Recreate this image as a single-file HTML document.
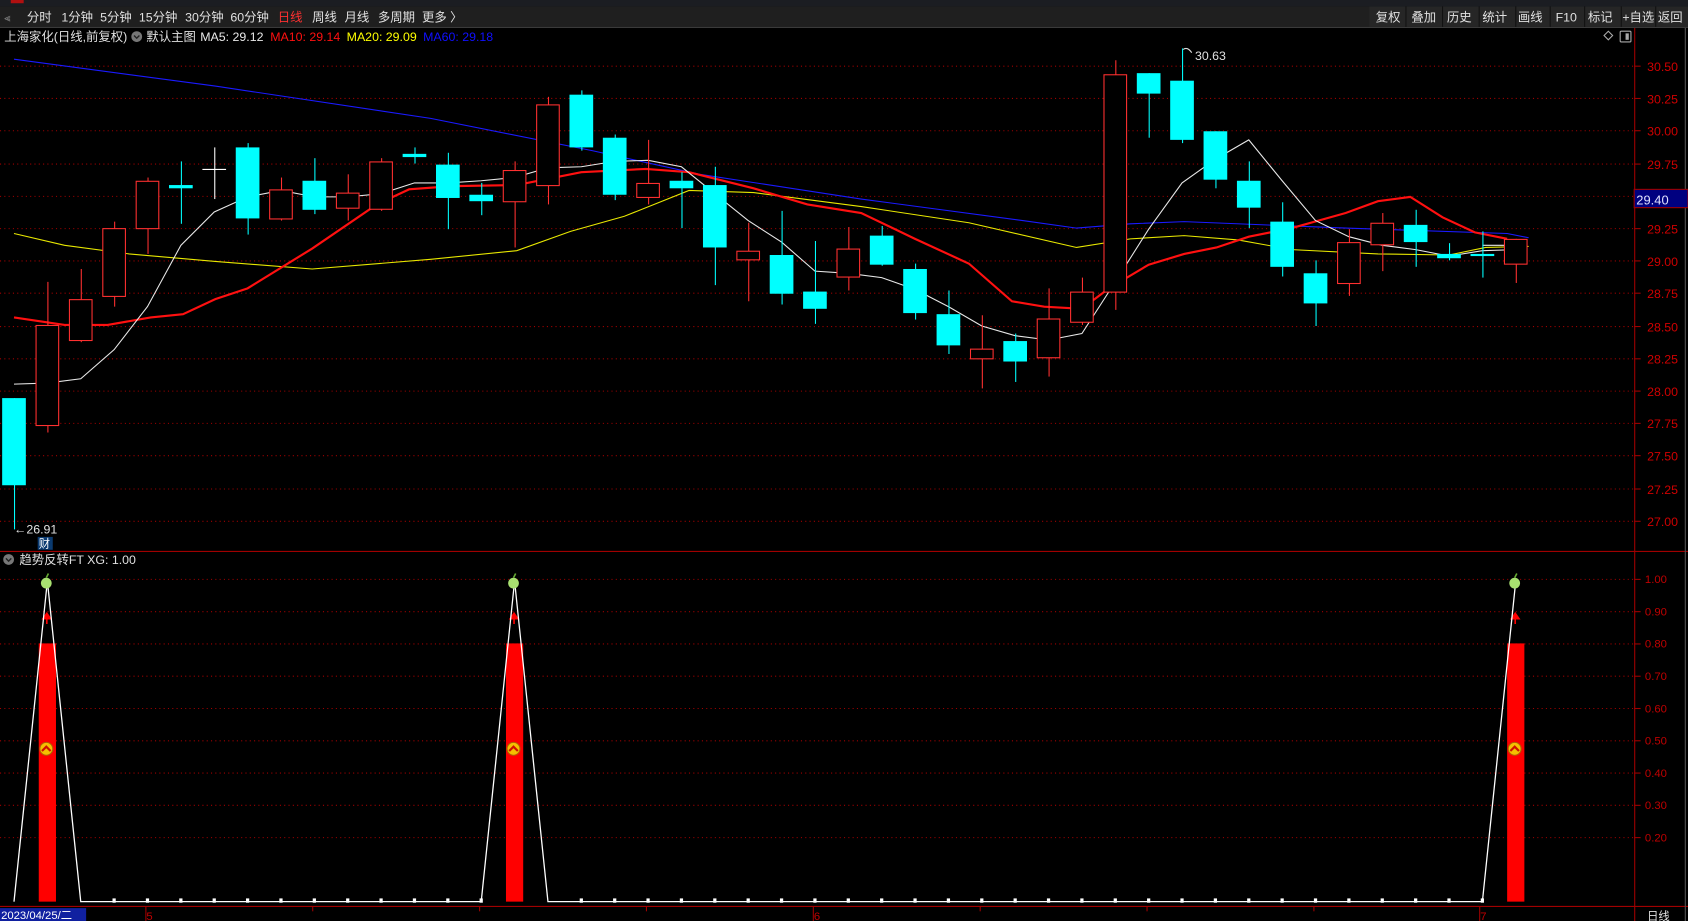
<!DOCTYPE html>
<html><head><meta charset="utf-8"><style>
html,body{margin:0;padding:0;background:#000;overflow:hidden}
svg{display:block}
text{font-family:"Liberation Sans","Noto Sans CJK SC",sans-serif}
</style></head><body>
<svg id="s" width="1688" height="921" viewBox="0 0 1568 856" preserveAspectRatio="none" xmlns="http://www.w3.org/2000/svg">
<rect width="1568" height="856" fill="#000"/>
<rect x="0" y="0" width="1568" height="6" fill="#1b1d22"/>
<rect x="10" y="0" width="12" height="3" fill="#b01010"/>
<rect x="0" y="6" width="1568" height="19" fill="#1f1f1f"/>
<line x1="0" y1="25.5" x2="1568" y2="25.5" stroke="#3a3a3a"/>
<g font-size="11.5" fill="#e0e0e0">
<text x="4" y="20" fill="#888" font-size="10">⫷</text>
<text x="25" y="20">分时</text><text x="57" y="20">1分钟</text><text x="93" y="20">5分钟</text>
<text x="129" y="20">15分钟</text><text x="172" y="20">30分钟</text><text x="214" y="20">60分钟</text>
<text x="258" y="20" fill="#ff3030">日线</text><text x="290" y="20">周线</text><text x="320" y="20">月线</text>
<text x="351" y="20">多周期</text><text x="392" y="20">更多 〉</text>
</g>
<g font-size="11.5" fill="#e0e0e0">
<rect x="1272" y="6" width="296" height="19" fill="#262626"/>
<g stroke="#111"><line x1="1306" y1="6" x2="1306" y2="25"/><line x1="1340" y1="6" x2="1340" y2="25"/><line x1="1374" y1="6" x2="1374" y2="25"/><line x1="1408" y1="6" x2="1408" y2="25"/><line x1="1440" y1="6" x2="1440" y2="25"/><line x1="1472" y1="6" x2="1472" y2="25"/><line x1="1506" y1="6" x2="1506" y2="25"/><line x1="1538" y1="6" x2="1538" y2="25"/></g>
<text x="1278" y="20">复权</text><text x="1311" y="20">叠加</text><text x="1344" y="20">历史</text><text x="1377" y="20">统计</text>
<text x="1410" y="20">画线</text><text x="1445" y="20">F10</text><text x="1475" y="20">标记</text><text x="1507" y="20">+自选</text><text x="1540" y="20">返回</text>
</g>
<g font-size="11.5">
<text x="4" y="38" fill="#e0e0e0">上海家化(日线,前复权)</text>
<circle cx="127" cy="34" r="5" fill="#777"/><path d="M124.5 33 L127 35.5 L129.5 33" stroke="#222" fill="none" stroke-width="1.3"/>
<text x="136" y="38" fill="#e0e0e0">默认主图</text>
<text x="186" y="38" fill="#e8e8e8">MA5: 29.12</text>
<text x="251" y="38" fill="#ff1010">MA10: 29.14</text>
<text x="322" y="38" fill="#ffff00">MA20: 29.09</text>
<text x="393" y="38" fill="#1010ff">MA60: 29.18</text>
</g>
<path d="M1490 33 l4 -4 l4 4 l-4 4z" stroke="#aaa" fill="none"/>
<rect x="1505" y="29" width="10" height="10" rx="1" stroke="#aaa" fill="none"/><rect x="1510" y="31" width="3" height="6" fill="#aaa"/>
<line x1="1518.5" y1="26" x2="1518.5" y2="856" stroke="#a00000"/>
<line x1="0" y1="512.5" x2="1568" y2="512.5" stroke="#a00000"/>
<line x1="0" y1="842.5" x2="1568" y2="842.5" stroke="#a00000"/>
<line x1="1565.5" y1="26" x2="1565.5" y2="856" stroke="#555"/>
<g id="grid" stroke="#a00000" stroke-dasharray="1 3"></g>
<g id="axis" font-size="11.5" fill="#d00000"></g>
<rect x="1518" y="176" width="50" height="17" fill="#000080" stroke="#a00000"/>
<text x="1520" y="190" font-size="12" fill="#e0e0ff">29.40</text>
<g id="ma"></g>
<g id="cd"></g>
<text x="1110" y="56" font-size="11.5" fill="#e0e0e0">30.63</text>
<path d="M1099 46 q4 -3 8 3" stroke="#ddd" fill="none"/>
<text x="13" y="496" font-size="11.5" fill="#e0e0e0">←26.91</text>
<rect x="35" y="499" width="14" height="12" fill="#0a3a70"/><text x="36" y="509" font-size="10.5" fill="#fff">财</text>
<circle cx="8" cy="520" r="5" fill="#777"/><path d="M5.5 519 L8 521.5 L10.5 519" stroke="#222" fill="none" stroke-width="1.3"/>
<text x="18" y="524" font-size="11.5" fill="#e0e0e0">趋势反转FT  XG: 1.00</text>
<g id="low"></g>
<g font-size="10.5" fill="#c00000">
<text x="1528" y="542">1.00</text><text x="1528" y="572">0.90</text><text x="1528" y="602">0.80</text><text x="1528" y="632">0.70</text><text x="1528" y="662">0.60</text><text x="1528" y="692">0.50</text><text x="1528" y="722">0.40</text><text x="1528" y="752">0.30</text><text x="1528" y="782">0.20</text>
</g>
<rect x="0" y="844" width="80" height="12" fill="#1020a0"/>
<text x="1" y="854" font-size="10.5" fill="#fff">2023/04/25/二</text>
<g font-size="10.5" fill="#c00000"><text x="136" y="855">5</text><text x="756" y="855">6</text><text x="1375" y="855">7</text></g>
<g stroke="#a00000"><line x1="135.5" y1="843" x2="135.5" y2="856"/><line x1="755.5" y1="843" x2="755.5" y2="856"/><line x1="1374.5" y1="843" x2="1374.5" y2="856"/><line x1="290.5" y1="843" x2="290.5" y2="847"/><line x1="445.5" y1="843" x2="445.5" y2="847"/><line x1="600.5" y1="843" x2="600.5" y2="847"/><line x1="910.5" y1="843" x2="910.5" y2="847"/><line x1="1065.5" y1="843" x2="1065.5" y2="847"/><line x1="1220.5" y1="843" x2="1220.5" y2="847"/></g>
<text x="1530" y="855" font-size="10.5" fill="#e0e0e0">日线</text>
</svg>
<script>
var NS="http://www.w3.org/2000/svg";
function el(p,t,a){var e=document.createElementNS(NS,t);for(var k in a)e.setAttribute(k,a[k]);document.getElementById(p).appendChild(e);return e;}
var P=[30.5,30.25,30,29.75,29.5,29.25,29,28.75,28.5,28.25,28,27.75,27.5,27.25,27];
P.forEach(function(p){var y=Math.round(61+(30.5-p)*120.8)+0.5;el("grid","line",{x1:0,y1:y,x2:1518,y2:y});el("grid","line",{x1:1518,y1:y,x2:1524,y2:y,"stroke-dasharray":"none"});
 if(p!=29.5){var t=el("axis","text",{x:1530,y:y+4.5});t.textContent=p.toFixed(2);}});
[1,0.9,0.8,0.7,0.6,0.5,0.4,0.3,0.2].forEach(function(v){var y=Math.round(538+(1-v)*300)+0.5;el("grid","line",{x1:0,y1:y,x2:1518,y2:y});el("grid","line",{x1:1518,y1:y,x2:1524,y2:y,"stroke-dasharray":"none"});});
function pl(pts,c,w){el("ma","polyline",{points:pts,stroke:c,"stroke-width":w,fill:"none"});}
pl("13,55 200,80 400,110 550,140 650,162 800,185 950,205 1000,212 1050,208 1100,206 1250,212 1400,217 1420,221","#1a1aff",1);
pl("13,217 60,228 120,236 200,243 290,250 400,241 480,233 530,215 580,201 640,177 700,179 800,192 900,207 1000,230 1050,222 1100,219 1150,223 1200,232 1280,236 1346,237 1380,230 1420,229","#e8e800",1);
pl("13,295 60,302 100,302 140,295 170,292 200,278 230,268 290,231 350,190 380,176 420,173 480,172 540,160 600,157 640,160 700,175 750,190 800,198 850,222 900,245 940,280 970,285 1005,287 1030,268 1067,246 1100,236 1130,230 1160,220 1200,212 1250,198 1280,187 1310,183 1340,202 1370,216 1400,222","#ff1010",2);
pl("13,357 44,356 75,352 106,325 137,285 168,228 199,197 230,183 261,177 292,183 323,183 354,180 385,170 416,170 447,168 478,165 509,156 540,155 571,150 602,149 633,155 664,180 695,205 726,225 757,252 788,254 819,258 850,269 881,285 912,303 943,312 974,316 1005,310 1036,262 1067,213 1098,170 1129,148 1160,130 1191,168 1222,205 1253,220 1284,228 1315,232 1346,238 1377,233 1408,232","#e8e8e8",1);
pl("1377,228 1408,228","#e8e8e8",1);
var C=[["c",370,451,370,492],["r",302,395,262,402],["r",278,316,250,318],["r",212,275,206,285],["r",168,212,165,236],["c",172,175,150,208],["w",157,158,137,185],["c",137,203,133,218],["r",176,203,165,205],["c",168,195,147,199],["r",179,193,162,205],["r",150,194,147,196],["c",143,146,137,152],["c",153,184,142,213],["c",181,187,170,200],["r",158,187,150,230],["r",97,172,90,190],["c",88,137,84,140],["c",128,181,125,186],["r",170,183,130,190],["c",168,175,160,212],["c",172,230,155,265],["r",233,241,207,280],["c",237,273,196,283],["c",271,287,224,301],["r",231,257,211,270],["c",219,246,210,247],["c",250,291,245,297],["c",292,321,270,329],["r",324,333,293,361],["c",317,336,310,355],["r",296,332,268,350],["r",271,299,258,302],["r",69,271,56,288],["c",68,87,68,128],["c",75,130,45,133],["c",122,167,122,175],["c",168,193,150,212],["c",206,248,188,257],["c",254,282,242,303],["r",225,263,213,275],["r",207,227,198,252],["c",209,225,195,248],["c",236,240,226,242],["c",236,238,215,258],["r",222,245,222,263]];
C.forEach(function(c,i){var x=13+31*i;var col=c[0]=="c"?"#00ffff":c[0]=="r"?"#ff3030":"#ffffff";
 el("cd","line",{x1:x+0.5,y1:c[3],x2:x+0.5,y2:c[4],stroke:col});
 if(c[0]=="c")el("cd","rect",{x:x-11,y:c[1],width:22,height:Math.max(2,c[2]-c[1]),fill:col});
 else if(c[0]=="r"){el("cd","rect",{x:x-10.5,y:c[1]+0.5,width:21,height:c[2]-c[1],fill:"#000",stroke:col});}
 else el("cd","line",{x1:x-11,y1:c[1]+0.5,x2:x+11,y2:c[1]+0.5,stroke:col});
});
[44,478,1408].forEach(function(x){
 el("low","rect",{x:x-8,y:598,width:16,height:240,fill:"#ff0000"});
 el("low","path",{d:"M"+(x-0.5)+" 580 v-9 M"+(x-4)+" 575 l3.5 -5 l3.5 5z",stroke:"#ff0000",fill:"#ff0000","stroke-width":1.5});
 el("low","circle",{cx:x-1,cy:696,r:6,fill:"#f5c000",stroke:"#b06000"});
 el("low","path",{d:"M"+(x-5)+" 698 l4 -4 l4 4",stroke:"#d01000",fill:"none","stroke-width":2});
});
el("low","polyline",{points:"13,838 44,540 75,838 447,838 478,540 509,838 1377,838 1408,540",stroke:"#fff",fill:"none","stroke-width":1.2});
for(var i=3;i<45;i++){var x=13+31*i; if(i==15||i==16)continue; el("low","rect",{x:x-1.5,y:835,width:3,height:4,fill:"#fff"});}
[44,478,1408].forEach(function(x){el("low","circle",{cx:x-1,cy:542,r:5,fill:"#a8e070"});el("low","line",{x1:x-1,y1:537,x2:x+1,y2:533,stroke:"#6a3","stroke-width":1.5});});
</script>
</body></html>
